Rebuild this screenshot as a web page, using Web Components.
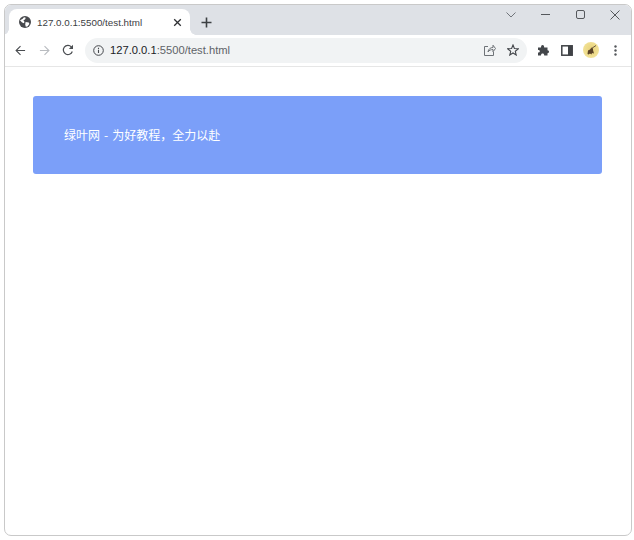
<!DOCTYPE html>
<html lang="zh"><head><meta charset="utf-8"><title>test</title>
<style>html,body{margin:0;padding:0;background:#fff;width:634px;height:540px;overflow:hidden}</style></head>
<body>
<browser-window>
  <browser-titlebar slot="titlebar" title-text="127.0.0.1:5500/test.html"></browser-titlebar>
  <browser-toolbar slot="toolbar" host-text="127.0.0.1" rest-text=":5500/test.html"></browser-toolbar>
  <notice-card>绿叶网 - 为好教程，全力以赴</notice-card>
</browser-window>
<script>
function def(name, html){
  customElements.define(name, class extends HTMLElement{
    constructor(){super();this.attachShadow({mode:'open'}).innerHTML=typeof html==='function'?html(this):html;}
    connectedCallback(){
      if(typeof html==='function'){this.shadowRoot.innerHTML=html(this);}
    }
  });
}
def('browser-window',`<style>
:host{display:flex;flex-direction:column;box-sizing:border-box;margin:4px 2px 4px 4px;height:532px;width:628px;border:1px solid #c9c9c9;border-radius:7px;overflow:hidden;background:#fff;font-family:"Liberation Sans",Arial,sans-serif}
main{flex:1;padding:29px 29px 0 28px}
</style><slot name="titlebar"></slot><slot name="toolbar"></slot><main><slot></slot></main>`);
def('browser-titlebar',el=>`<style>
:host{display:flex;height:30px;background:#dee1e6;box-sizing:border-box;padding:4px 0 0 4px;align-items:stretch;position:relative}
.tab{position:relative;width:181px;background:#fff;border-radius:8px 8px 0 0;display:flex;align-items:center;box-sizing:border-box;padding:0 8px 0 10px;gap:6px;color:#3c4043;font-size:9.8px}
.tab::before,.tab::after{content:"";position:absolute;bottom:0;width:6px;height:6px}
.tab::before{left:-6px;background:radial-gradient(circle at 0 0,transparent 5.5px,#fff 6px)}
.tab::after{right:-6px;background:radial-gradient(circle at 100% 0,transparent 5.5px,#fff 6px)}
.tab span{flex:1;white-space:nowrap}
.new{width:32px;display:flex;align-items:center;justify-content:center}
.controls{margin-left:auto;display:flex;align-items:flex-start;margin-top:-4px;margin-right:-1px}
.controls div{width:34.5px;height:19px;display:flex;align-items:center;justify-content:center}
svg{display:block;flex:none}
</style>
<div class="tab">
<svg width="12" height="12" viewBox="0 0 12 12"><circle cx="6" cy="6" r="6" fill="#47494d"/><path d="M1 4.2 3.4 3 5 1.2 6.8 1.8 6 3.4 4.4 4.2 5.6 6 4.6 7.2 2.8 6.2Z M6.6 6 9.8 6.4 10.4 8 8.4 10.6 6.8 10.8 6.2 8.4Z" fill="#fff"/></svg>
<span>${el.getAttribute('title-text')}</span>
<svg width="9" height="9" viewBox="0 0 9 9"><path d="M1.2 1.2 7.8 7.8M7.8 1.2 1.2 7.8" stroke="#2f3134" stroke-width="1.3"/></svg>
</div>
<div class="new"><svg width="11" height="11" viewBox="0 0 11 11"><path d="M5.5.5v10M.5 5.5h10" stroke="#3c4043" stroke-width="1.6"/></svg></div>
<div class="controls">
<div><svg width="10" height="6" viewBox="0 0 10 6"><path d="M.5.5 5 5 9.5.5" fill="none" stroke="#70747a" stroke-width="1"/></svg></div>
<div><svg width="9" height="1" viewBox="0 0 9 1"><path d="M0 .5h9" stroke="#55585c" stroke-width="1"/></svg></div>
<div><svg width="9" height="9" viewBox="0 0 9 9"><rect x=".5" y=".5" width="8" height="8" rx="1.5" fill="none" stroke="#55585c"/></svg></div>
<div><svg width="10" height="10" viewBox="0 0 10 10"><path d="M.5.5l9 9M9.5.5l-9 9" stroke="#55585c" stroke-width="1"/></svg></div>
</div>`);
def('browser-toolbar',el=>`<style>
:host{display:flex;align-items:center;height:32px;box-sizing:border-box;background:#fff;border-bottom:1px solid #e6e6e6;padding:0 0 1px 3px}
.nav{width:24px;display:flex;justify-content:center;align-items:center}
.bar{width:442px;height:25px;margin-left:5px;border-radius:13px;background:#f1f3f4;display:flex;align-items:center;box-sizing:border-box;padding:0 2px 0 8px;font-size:11.2px;color:#5f6368}
.bar b{font-weight:400;color:#202124}
.url{margin-left:6px;flex:1;white-space:nowrap}
.i{width:24px;display:flex;justify-content:center;align-items:center}
.ext{display:flex;margin-left:4px}
.avatar{width:16px;height:16px;border-radius:50%;background:radial-gradient(circle at 50% 45%,#e8d27a,#f6e8a2);display:block}
svg{display:block}
</style>
<div class="nav"><svg width="11" height="11" viewBox="0 0 12 12"><path d="M11 6H1.5M6 1.2 1.2 6 6 10.8" fill="none" stroke="#4a4d51" stroke-width="1.2"/></svg></div>
<div class="nav"><svg width="11" height="11" viewBox="0 0 12 12"><path d="M1 6h9.500M6 1.200 10.800 6 6 10.800" fill="none" stroke="#b9bcc0" stroke-width="1.200"/></svg></div>
<div class="nav"><svg width="12" height="12" viewBox="0 0 12 12"><path d="M10.300 7.500A4.600 4.600 0 1 1 9.300 2.800L10.800 4.300" fill="none" stroke="#4a4d51" stroke-width="1.200"/><path d="M11 .8V5H6.800Z" fill="#4a4d51"/></svg></div>
<div class="bar">
<svg width="11" height="11" viewBox="0 0 11 11"><circle cx="5.500" cy="5.500" r="4.800" fill="none" stroke="#45484c" stroke-width="1"/><path d="M5.500 4.800v3.200M5.500 2.700v1.200" stroke="#45484c" stroke-width="1.100"/></svg>
<div class="url"><b>${el.getAttribute('host-text')}</b>${el.getAttribute('rest-text')}</div>
<div class="i"><svg width="13" height="12" viewBox="0 0 13 12"><path d="M5 2.500H1.500v9h9V8M5 8c.3-3 2.500-4.500 5-4.500V1.200l2.500 3.300L10 7.800V5.500C8 5.500 6 6.300 5 8Z" fill="none" stroke="#6e7277" stroke-width="1"/></svg></div>
<div class="i"><svg width="12" height="12" viewBox="0 0 12 12"><path d="M6 1 7.400 4.500 11.300 4.800 8.300 7.300 9.200 11 6 9 2.800 11 3.700 7.300 .7 4.800 4.600 4.500Z" fill="none" stroke="#43464a" stroke-width="1.100"/></svg></div>
</div>
<div class="ext">
<div class="i"><svg width="12" height="12" viewBox="0 0 12 12"><path d="M1 3.500H4C4 1.800 4.700 1 5.600 1s1.600.8 1.600 2.500h3.300v2.800c1.200 0 1.500.8 1.500 1.500s-.5 1.500-1.500 1.500V11.500H7.200C7.200 10 6.500 9.500 5.600 9.500S4 10 4 11.500H1V8.600C2.300 8.600 2.800 8 2.800 7.200S2.300 6 1 6Z" fill="#43464a"/></svg></div>
<div class="i"><svg width="12" height="11" viewBox="0 0 12 11"><rect x=".8" y=".8" width="10.400" height="9.400" fill="none" stroke="#3f4246" stroke-width="1.500"/><rect x="7" y="1" width="4" height="9" fill="#3f4246"/></svg></div>
<div class="i"><svg class="avatar" width="16" height="16" viewBox="0 0 16 16"><path d="M4.500 12 5 8.500 7 7.500 8.500 5.500 10 6.500 10 8 11 11.500 9 11 8.500 12.500 7 11.500 5.500 12.500Z" fill="#5b4327"/><path d="M8.500 6.500 13 3.500" stroke="#6d5a3d" stroke-width="1"/></svg></div>
<div class="i"><svg width="3" height="11" viewBox="0 0 3 11"><circle cx="1.500" cy="1.500" r="1.200" fill="#55585c"/><circle cx="1.500" cy="5.500" r="1.200" fill="#55585c"/><circle cx="1.500" cy="9.500" r="1.200" fill="#55585c"/></svg></div>
</div>`);
def('notice-card',`<style>
:host{display:flex;align-items:center;height:78px;box-sizing:border-box;padding:0 31px;background:#7b9ff9;border-radius:3px;color:#fff;font:12px/1.2 "Noto Sans CJK SC","Liberation Sans",sans-serif;word-spacing:1.3px}
</style><span><slot></slot></span>`);
</script>
</body></html>
